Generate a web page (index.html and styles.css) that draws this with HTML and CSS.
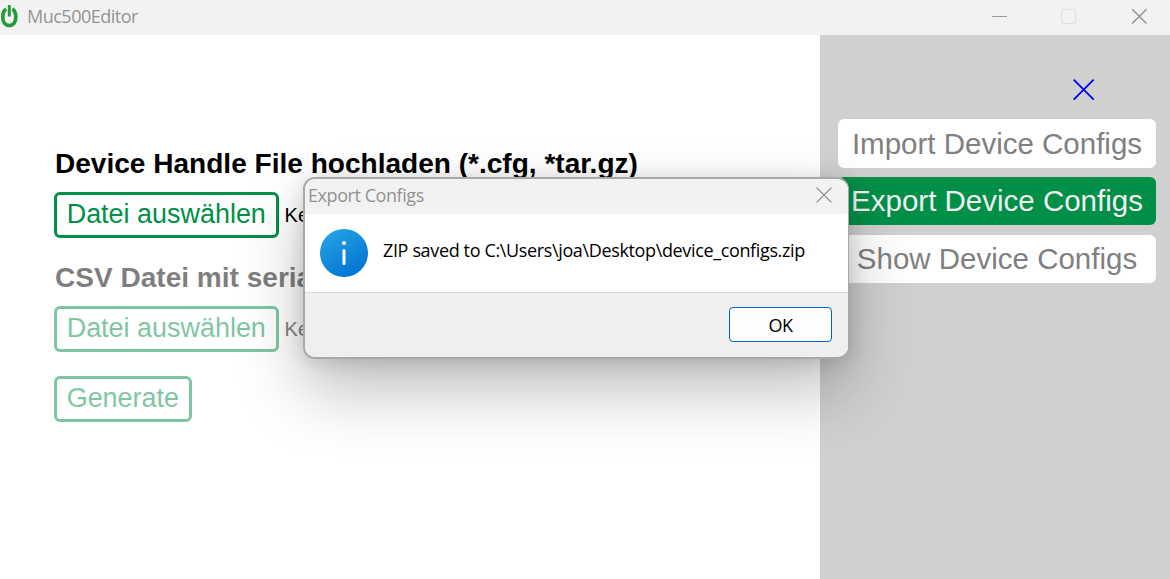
FILE: index.html
```html
<!DOCTYPE html>
<html lang="de">
<head>
<meta charset="utf-8">
<title>Muc500Editor</title>
<link rel="stylesheet" href="styles.css">
</head>
<body>
<div class="window">
  <header class="titlebar">
    <svg class="logo" width="18" height="24" viewBox="0 0 18 24"><path d="M6.2 4C4 5.4 2.8 8.2 2.8 11.9c0 5.2 2.4 8.6 6.5 8.6s6.5-3.4 6.5-8.6c0-3.7-1.2-6.5-3.4-7.9" fill="none" stroke="#249c3c" stroke-width="3.7"/><path d="M9.3 0v11.5" stroke="#249c3c" stroke-width="3"/></svg>
    <span class="app-name">Muc500Editor</span>
    <div class="controls">
      <svg width="16" height="16" viewBox="0 0 16 16"><path d="M1 8.5h15" stroke="#999"/></svg>
      <svg width="16" height="16" viewBox="0 0 16 16"><rect x="1.5" y="1.5" width="14" height="14" rx="1.5" fill="none" stroke="#dfdfdf"/></svg>
      <svg width="16" height="16" viewBox="0 0 16 16"><path d="M1.2 1.2l14.3 14.3M15.5 1.2L1.2 15.5" stroke="#8c8c8c" stroke-width="1.3"/></svg>
    </div>
  </header>
  <div class="body">
    <main class="content">
      <h2 class="heading">Device Handle File hochladen (*.cfg, *tar.gz)</h2>
      <div class="row"><button class="btn">Datei auswählen</button><span class="file">Ke</span></div>
      <section class="disabled">
        <h2 class="heading second">CSV Datei mit seria</h2>
        <div class="row"><button class="btn">Datei auswählen</button><span class="file">Ke</span></div>
        <button class="btn generate">Generate</button>
      </section>
    </main>
    <aside class="sidebar">
      <svg class="close" width="22" height="22" viewBox="0 0 22 22"><path d="M.7.7l20 20M20.7.7l-20 20" stroke="#0000f5" stroke-width="1.8"/></svg>
      <nav class="menu">
        <a class="item">Import Device Configs</a>
        <a class="item active">Export Device Configs</a>
        <a class="item">Show Device Configs</a>
      </nav>
    </aside>
  </div>
  <div class="dialog">
    <div class="dialog-title"><span class="dialog-name">Export Configs</span>
      <svg class="dialog-close" width="16" height="16" viewBox="0 0 16 16"><path d="M.6.6l14.8 14.8M15.4.6L.6 15.4" stroke="#8c8c8c" stroke-width="1.3"/></svg>
    </div>
    <div class="message">
      <svg width="48" height="48" viewBox="0 0 48 48"><defs><linearGradient id="blue" x1=".2" y1="0" x2=".8" y2="1"><stop offset="0" stop-color="#25a2e5"/><stop offset="1" stop-color="#0071d2"/></linearGradient></defs><circle cx="24" cy="24" r="24" fill="url(#blue)"/><circle cx="24" cy="14" r="2.1" fill="#fff"/><path d="M24 21.5v13" stroke="#fff" stroke-width="3" stroke-linecap="round"/></svg>
      <span class="message-text">ZIP saved to C:\Users\joa\Desktop\device_configs.zip</span>
    </div>
    <div class="actions"><button class="ok">OK</button></div>
  </div>
</div>
</body>
</html>
```
FILE: styles.css
```css
* { box-sizing: border-box; }
body { margin: 0; font-family: "Liberation Sans", Arial, sans-serif; background: #fff; }
.window { position: relative; width: 1170px; height: 579px; overflow: hidden; display: flex; flex-direction: column; }
.titlebar { height: 35px; flex: none; display: flex; align-items: center; background: #f2f2f2; padding-right: 23px; }
.logo { margin: -1px 9px 0 0; }
.app-name { font: 18px "Open Sans", sans-serif; letter-spacing: -.5px; color: #929292; margin-top: -3px; }
.controls { display: flex; gap: 53px; margin: -3px 0 0 auto; }
.controls svg:last-child { margin-left: 2px; }
.body { flex: 1; display: flex; }
.content { width: 820px; padding: 112px 0 0 54px; }
.heading { margin: 0 0 11px; padding-left: 1px; font-size: 28.05px; line-height: 34px; white-space: nowrap; color: #000; }
.second { margin-top: 23px; }
.row { display: flex; align-items: center; gap: 6px; }
.btn { display: block; height: 46px; padding: 0 9.7px 2px; border: 3px solid #008f48; border-radius: 6px; background: transparent; color: #008f48; font: 26.95px/38px "Liberation Sans", Arial, sans-serif; white-space: nowrap; }
.file { font-size: 20px; color: #000; }
.disabled { opacity: .5; }
.generate { margin-top: 24px; }
.sidebar { flex: 1; background: #d0d0d0; padding: 44px 14px 0 18px; display: flex; flex-direction: column; }
.close { align-self: flex-end; margin-right: 61px; }
.menu { margin-top: 18px; display: flex; flex-direction: column; gap: 10px; }
.item { height: 48px; border-radius: 6px; background: #fff; color: #808080; font-size: 29.5px; line-height: 48px; text-align: center; white-space: nowrap; }
.item:first-child { height: 49px; margin-bottom: -1px; line-height: 49px; }
.active { background: #008f48; color: #f0f0f0; }
.dialog { position: absolute; left: 303px; top: 177px; width: 546px; height: 182px; border: 2px solid #a8a8a8; border-right-width: 1px; border-radius: 12px; background: #fff; background-clip: padding-box; overflow: hidden; display: flex; flex-direction: column; box-shadow: 0 32px 64px rgba(0,0,0,.25), 0 2px 20px rgba(0,0,0,.15); font-family: "Open Sans", sans-serif; }
.dialog-title { height: 35px; flex: none; padding: 0 16px 0 3px; display: flex; align-items: center; justify-content: space-between; background: #f2f2f2; color: #929292; font-size: 18px; }
.dialog-name { letter-spacing: -.43px; margin-top: -3px; }
.dialog-close { margin-top: -3px; }
.message { flex: 1; padding: 0 15px; display: flex; align-items: center; gap: 15px; }
.message-text { font-size: 18px; letter-spacing: -.36px; color: #000; white-space: nowrap; margin-top: -7px; }
.actions { height: 65px; flex: none; border-top: 1px solid #dcdcdc; background: #efefef; padding: 14px 16px; display: flex; justify-content: flex-end; }
.ok { width: 103px; height: 35px; border: 1px solid #0067c0; border-radius: 4px; background: #fdfdfd; color: #000; font: 18px "Open Sans", sans-serif; letter-spacing: -.5px; }
```
